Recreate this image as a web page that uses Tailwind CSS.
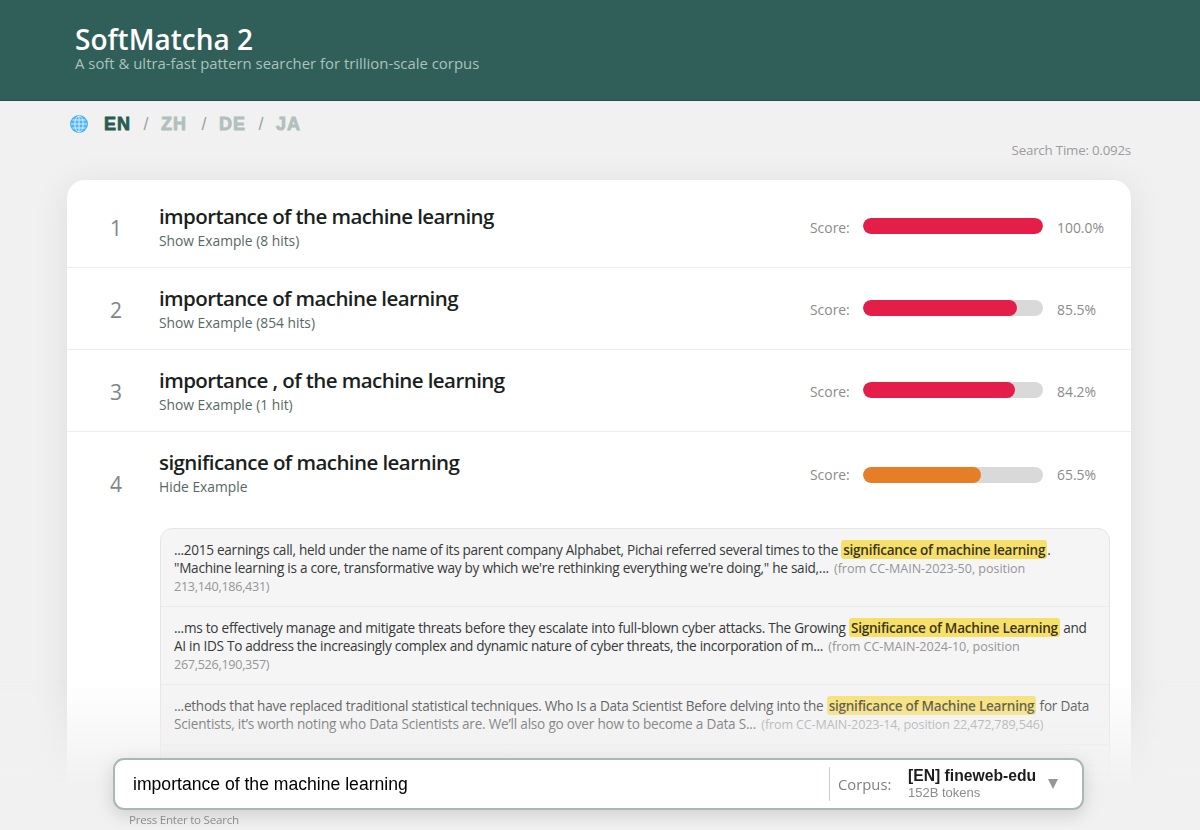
<!DOCTYPE html>
<html lang="en">
<head>
    <meta charset="UTF-8">
    <meta name="viewport" content="width=device-width, initial-scale=1.0">
    <title>SoftMatcha 2</title>
    <script src="https://cdn.jsdelivr.net/npm/@tailwindcss/browser@4"></script>
</head>
<body class="bg-[#f1f1f1] h-screen overflow-hidden font-['Open_Sans',sans-serif] text-[#1b1f1e]">
    <header class="bg-[#305e58] h-[101px] pl-[75px] pt-[24px] border-b border-[#28504a]">
        <h1 class="text-white font-semibold text-[28px] leading-[30px] whitespace-nowrap">SoftMatcha 2</h1>
        <p class="text-[#acc2be] text-[14.9px] leading-[18px] whitespace-nowrap">A soft &amp; ultra-fast pattern searcher for trillion-scale corpus</p>
    </header>

    <nav class="flex items-center h-[46px] pl-[70px] font-['Liberation_Sans',sans-serif] text-[18px]">
        <svg class="size-[18px] mr-[16px]" viewBox="0 0 18 18" fill="none"><circle cx="9" cy="9" r="9" fill="#4fb4f3"/><g stroke="#d8f0fd" stroke-width="1"><ellipse cx="9" cy="9" rx="4.2" ry="8"/><path d="M9 1v16M1 9h16M2.5 5h13M2.5 13h13"/></g></svg>
        <span class="font-bold text-[#2b5a53] w-[27px] tracking-[1px] [-webkit-text-stroke:0.8px]">EN</span>
        <span class="text-[#9aa5a3] w-[30px] text-center">/</span>
        <span class="font-bold text-[#b1c0bd] w-[28px] tracking-[1px] [-webkit-text-stroke:0.8px]">ZH</span>
        <span class="text-[#9aa5a3] w-[30px] text-center">/</span>
        <span class="font-bold text-[#b1c0bd] w-[27px] tracking-[1px] [-webkit-text-stroke:0.8px]">DE</span>
        <span class="text-[#9aa5a3] w-[30px] text-center">/</span>
        <span class="font-bold text-[#b1c0bd] tracking-[1px] [-webkit-text-stroke:0.8px]">JA</span>
    </nav>

    <div class="h-[33px] pr-[69px] -mt-[6px] text-right text-[13.3px] leading-[18px] tracking-[-0.2px] text-[#9c9c9c]">Search Time: 0.092s</div>

    <main class="mx-[67px] mr-[69px] mt-[6px] pt-[6px] h-[640px] bg-white rounded-[18px] shadow-[0_6px_36px_rgba(0,0,0,0.09)]">
        <section class="flex h-[82px] border-b border-[#ededed] items-center">
            <div class="w-[92px] pl-[43px] pt-[5px] text-[21px] text-[#808685]">1</div>
            <div class="flex-1 pb-px whitespace-nowrap">
                <h2 class="text-[20.5px] leading-[28px] font-semibold tracking-[-0.6px]">importance of the machine learning</h2>
                <p class="pt-px text-[13.8px] leading-[20px] text-[#596865]">Show Example (8 hits)</p>
            </div>
            <div class="flex items-center w-[321px] text-[13.9px] text-[#8b8b8b]">
                <span class="w-[53px] pt-[3px]">Score:</span>
                <div class="w-[180px] h-[16px] mr-[14px] rounded-full bg-[#d9d9d9] overflow-hidden"><div class="h-full rounded-full bg-[#e41e49]" style="width:100%"></div></div>
                <span class="pt-[3px]">100.0%</span>
            </div>
        </section>
        <section class="flex h-[82px] border-b border-[#ededed] items-center">
            <div class="w-[92px] pl-[43px] pt-[5px] text-[21px] text-[#808685]">2</div>
            <div class="flex-1 pb-px whitespace-nowrap">
                <h2 class="text-[20.5px] leading-[28px] font-semibold tracking-[-0.6px]">importance of machine learning</h2>
                <p class="pt-px text-[13.8px] leading-[20px] text-[#596865]">Show Example (854 hits)</p>
            </div>
            <div class="flex items-center w-[321px] text-[13.9px] text-[#8b8b8b]">
                <span class="w-[53px] pt-[3px]">Score:</span>
                <div class="w-[180px] h-[16px] mr-[14px] rounded-full bg-[#d9d9d9] overflow-hidden"><div class="h-full rounded-full bg-[#e41e49]" style="width:85.5%"></div></div>
                <span class="pt-[3px]">85.5%</span>
            </div>
        </section>
        <section class="flex h-[82px] border-b border-[#ededed] items-center">
            <div class="w-[92px] pl-[43px] pt-[5px] text-[21px] text-[#808685]">3</div>
            <div class="flex-1 pb-px whitespace-nowrap">
                <h2 class="text-[20.5px] leading-[28px] font-semibold tracking-[-0.57px]">importance , of the machine learning</h2>
                <p class="pt-px text-[13.8px] leading-[20px] text-[#596865]">Show Example (1 hit)</p>
            </div>
            <div class="flex items-center w-[321px] text-[13.9px] text-[#8b8b8b]">
                <span class="w-[53px] pt-[3px]">Score:</span>
                <div class="w-[180px] h-[16px] mr-[14px] rounded-full bg-[#d9d9d9] overflow-hidden"><div class="h-full rounded-full bg-[#e41e49]" style="width:84.2%"></div></div>
                <span class="pt-[3px]">84.2%</span>
            </div>
        </section>
        <section>
            <div class="flex h-[96px]">
                <div class="w-[92px] pl-[43px] pt-[38px] text-[21px] leading-[28px] text-[#808685]">4</div>
                <div class="flex-1 pt-[16px] whitespace-nowrap">
                    <h2 class="text-[20.5px] leading-[28px] font-semibold tracking-[-0.57px]">significance of machine learning</h2>
                    <p class="pt-px text-[13.8px] leading-[20px] text-[#596865]">Hide Example</p>
                </div>
                <div class="flex items-center h-[85px] w-[321px] text-[13.9px] text-[#8b8b8b]">
                    <span class="w-[53px] pt-[2px]">Score:</span>
                    <div class="w-[180px] h-[16px] mr-[14px] rounded-full bg-[#d9d9d9] overflow-hidden"><div class="h-full rounded-full bg-[#e67e28]" style="width:65.5%"></div></div>
                    <span class="pt-[2px]">65.5%</span>
                </div>
            </div>
            <div class="ml-[93px] w-[950px] h-[290px] rounded-[12px] border border-[#e5e5e5] bg-[#f5f5f5] text-[13.6px] leading-[18px] tracking-[-0.29px] text-[#363a39] whitespace-nowrap">
                <div class="h-[78px] px-[13px] pt-[12px] border-b border-[#ebebeb]">
                    <div>...2015 earnings call, held under the name of its parent company Alphabet, Pichai referred several times to the <mark class="bg-[#f7e06a] text-[#3a3618] font-semibold rounded-[3px] px-[2px]">significance of machine learning</mark>.</div>
                    <div class="tracking-[-0.27px]">"Machine learning is a core, transformative way by which we're rethinking everything we're doing," he said,... <span class="ml-[2px] text-[12.6px] tracking-[-0.06px] text-[#969696]">(from CC-MAIN-2023-50, position</span></div>
                    <div class="text-[12.6px] text-[#969696]">213,140,186,431)</div>
                </div>
                <div class="h-[78px] px-[13px] pt-[12px] border-b border-[#ebebeb]">
                    <div class="tracking-[-0.26px]">...ms to effectively manage and mitigate threats before they escalate into full-blown cyber attacks. The Growing <mark class="bg-[#f7e06a] text-[#3a3618] font-semibold rounded-[3px] px-[2px]">Significance of Machine Learning</mark> and</div>
                    <div>AI in IDS To address the increasingly complex and dynamic nature of cyber threats, the incorporation of m... <span class="ml-[2px] text-[12.6px] tracking-[-0.06px] text-[#969696]">(from CC-MAIN-2024-10, position</span></div>
                    <div class="text-[12.6px] text-[#969696]">267,526,190,357)</div>
                </div>
                <div class="h-[60px] px-[13px] pt-[12px] border-b border-[#ebebeb]">
                    <div class="tracking-[-0.27px]">...ethods that have replaced traditional statistical techniques. Who Is a Data Scientist Before delving into the <mark class="bg-[#f7e06a] text-[#3a3618] font-semibold rounded-[3px] px-[2px]">significance of Machine Learning</mark> for Data</div>
                    <div class="tracking-[-0.22px]">Scientists, it’s worth noting who Data Scientists are. We’ll also go over how to become a Data S... <span class="ml-[2px] text-[12.6px] tracking-[-0.15px] text-[#969696]">(from CC-MAIN-2023-14, position 22,472,789,546)</span></div>
                </div>
            </div>
        </section>
    </main>

    <!-- search bar over the fading result list -->
    <footer class="fixed inset-x-0 bottom-0 h-[150px] pt-[78px] bg-linear-to-b from-[#f1f1f1]/0 to-[#f1f1f1] to-[105px]">
        <div class="flex items-center ml-[113px] w-[971px] h-[52px] rounded-[11px] border-2 border-[#a9b8b5] bg-white shadow-[0_5px_18px_rgba(0,0,0,0.15)] font-['Liberation_Sans',sans-serif]">
            <div class="flex-1 pl-[18px] text-[17.6px] text-black">importance of the machine learning</div>
            <div class="flex items-center w-[253px] h-[34px] border-l border-[#c4d2cf] pl-[8px]">
                <span class="w-[70px] text-[14.8px] font-['Open_Sans',sans-serif] text-[#808080]">Corpus:</span>
                <div class="w-[140px]">
                    <div class="text-[15.7px] leading-[18px] font-bold text-[#1c1c1c]">[EN] fineweb-edu</div>
                    <div class="text-[13px] leading-[16px] text-[#8c8c8c]">152B tokens</div>
                </div>
                <svg class="w-[10px] h-[10px]" viewBox="0 0 10 10"><path d="M0 0h10L5 10z" fill="#969696"/></svg>
            </div>
        </div>
        <div class="ml-[129px] text-[11.6px] leading-[20px] tracking-[-0.25px] text-[#8c8c8c]">Press Enter to Search</div>
    </footer>
</body>
</html>
